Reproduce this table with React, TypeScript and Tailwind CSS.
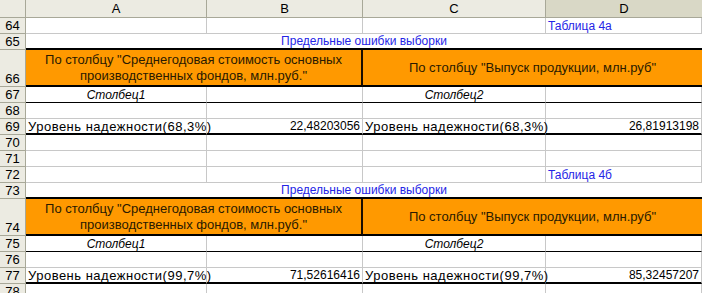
import React from "react";

const G = "border-[#c8c8c8]";

function RowHead({ n, tall }: { n: number; tall?: boolean }) {
  return (
    <div
      className={`bg-[#ecebe2] border-r border-b border-[#a8a898] flex ${tall ? "items-end pb-[1px]" : "items-center"} justify-center text-[13px] text-black leading-none`}
    >
      {n}
    </div>
  );
}

function Cell({
  children,
  className = "",
}: {
  children?: React.ReactNode;
  className?: string;
}) {
  return (
    <div className={`border-r border-b ${G} flex items-center px-[2px] whitespace-nowrap overflow-visible leading-none ${className}`}>
      {children}
    </div>
  );
}

export default function App() {
  const thickB = "border-b-2 border-b-black";
  const thinB = "border-b border-b-black";
  return (
    <div
      className="w-[702px] h-[293px] overflow-hidden bg-white"
      style={{ fontFamily: '"Liberation Sans", Arial, sans-serif' }}
    >
      <div className="grid grid-cols-[26px_181px_156px_183px_156px] grid-rows-[18px_16px_16px_37px_16px_16px_16px_16px_16px_16px_16px_37px_16px_16px_16px_16px]">
        {/* header */}
        <div className="bg-[#ecebe2] border-r border-b border-[#a8a898]" />
        <div className="bg-[#ecebe2] border-r border-b border-[#a8a898] flex items-center justify-center text-[13px]">A</div>
        <div className="bg-[#ecebe2] border-r border-b border-[#a8a898] flex items-center justify-center text-[13px]">B</div>
        <div className="bg-[#ecebe2] border-r border-b border-[#a8a898] flex items-center justify-center text-[13px]">C</div>
        <div className="bg-[#d9d8c6] border-b border-[#a8a898] flex items-center justify-center text-[13px]">D</div>

        {[0, 1].map((k) => {
          const base = k === 0 ? 64 : 72;
          const table = k === 0 ? "Таблица 4а" : "Таблица 4б";
          const pct = k === 0 ? "68,3%" : "99,7%";
          const v1 = k === 0 ? "22,48203056" : "71,52616416";
          const v2 = k === 0 ? "26,81913198" : "85,32457207";
          return (
            <React.Fragment key={k}>
              {k === 1 && (
                <>
                  {[70, 71].map((n) => (
                    <React.Fragment key={n}>
                      <RowHead n={n} />
                      <Cell />
                      <Cell />
                      <Cell />
                      <Cell />
                    </React.Fragment>
                  ))}
                </>
              )}
              {/* table label row */}
              <RowHead n={base} />
              <Cell />
              <Cell />
              <Cell />
              <Cell className="text-[12px] text-[#2424e6]">{table}</Cell>
              {/* title row */}
              <RowHead n={base + 1} />
              <div className={`col-span-4 ${thickB} flex items-center justify-center text-[12px] text-[#2424e6] leading-none`}>
                Предельные ошибки выборки
              </div>
              {/* orange row */}
              <RowHead n={base + 2} tall />
              <div className={`col-span-2 bg-[#ff9900] border-r-2 border-r-[#1a0d00] ${thickB} flex items-center justify-center text-center text-[13px] leading-[16px] text-[#2a1a00]`}>
                <div>
                  По столбцу "Среднегодовая стоимость основных
                  <br />
                  производственных фондов, млн.руб."
                </div>
              </div>
              <div className={`col-span-2 bg-[#ff9900] ${thickB} flex items-center justify-center text-[13px] leading-none text-[#2a1a00]`}>
                По столбцу "Выпуск продукции, млн.руб"
              </div>
              {/* Столбец row */}
              <RowHead n={base + 3} />
              <Cell className={`justify-center italic text-[12px] ${thinB}`}>Столбец1</Cell>
              <Cell className={thinB} />
              <Cell className={`justify-center italic text-[12px] ${thinB}`}>Столбец2</Cell>
              <Cell className={thinB} />
              {/* empty */}
              <RowHead n={base + 4} />
              <Cell />
              <Cell />
              <Cell />
              <Cell />
              {/* values */}
              <RowHead n={base + 5} />
              <Cell className={`text-[13px] tracking-[0.5px] ${thickB}`}>Уровень надежности({pct})</Cell>
              <Cell className={`justify-end text-[12px] ${thickB}`}>{v1}</Cell>
              <Cell className={`text-[13px] tracking-[0.5px] ${thickB}`}>Уровень надежности({pct})</Cell>
              <Cell className={`justify-end text-[12px] ${thickB}`}>{v2}</Cell>
            </React.Fragment>
          );
        })}
        {/* row 78 */}
        <RowHead n={78} />
        <Cell />
        <Cell />
        <Cell />
        <Cell />
      </div>
    </div>
  );
}
